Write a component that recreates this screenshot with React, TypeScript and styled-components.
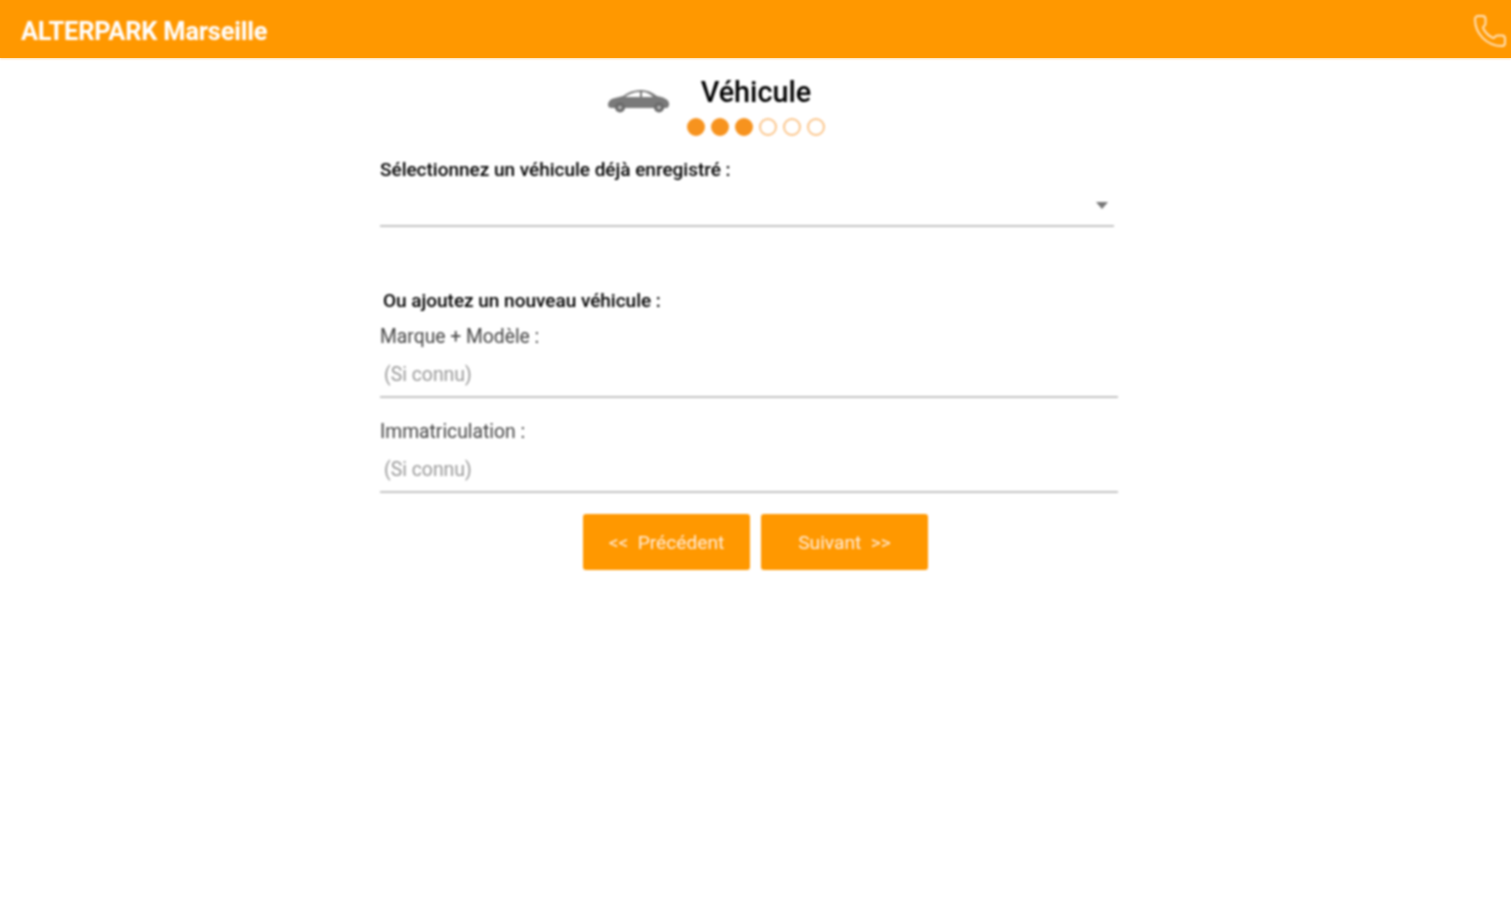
import React from "react";
import styled, { createGlobalStyle } from "styled-components";
import { Phone } from "lucide-react";

const Global = createGlobalStyle`
  html, body { margin: 0; padding: 0; background: #fff; }
  body { font-family: Roboto, "Liberation Sans", sans-serif; }
`;
const Page = styled.div`
  width: 1511px;
  height: 900px;
  overflow: hidden;
  background: #fff;
`;
const Header = styled.header`
  height: 58px;
  background: #ff9800;
  display: flex;
  align-items: center;
  justify-content: space-between;
  padding: 0 3px 0 21px;
  box-shadow: 0 1px 2px rgba(255, 152, 0, 0.35);
`;
const Brand = styled.div`
  font-size: 25.4px;
  font-weight: 700;
  color: #fff;
  letter-spacing: -0.2px;
  padding-top: 3px;
  filter: blur(0.8px);
`;
const PhoneIcon = styled(Phone)`
  color: #ffe3bd;
  width: 36px;
  height: 36px;
  margin-top: 3px;
  filter: blur(0.8px);
`;
const Main = styled.main`
  width: 738px;
  margin-left: 380px;
  display: flex;
  flex-direction: column;
  filter: blur(0.8px);
`;
const StepHead = styled.div`
  display: flex;
  height: 100px;
  padding-left: 227px;
  gap: 20px;
  align-items: flex-start;
`;
const CarIcon = styled.svg`
  width: 63px;
  height: 26px;
  margin-top: 30px;
  flex: none;
`;
const StepInfo = styled.div`
  display: flex;
  flex-direction: column;
  align-items: center;
  width: 136px;
  margin-left: -2px;
`;
const StepTitle = styled.div`
  font-size: 28.8px;
  font-weight: 500;
  line-height: 34px;
  margin-top: 17px;
  color: #000;
`;
const Dots = styled.div`
  display: flex;
  gap: 6px;
  margin-top: 9px;
`;
const Dot = styled.span<{ $on: boolean }>`
  width: 18px;
  height: 18px;
  box-sizing: border-box;
  border-radius: 50%;
  border: 2px solid ${(p) => (p.$on ? "#f7931e" : "#fbc58a")};
  background: ${(p) => (p.$on ? "#f7931e" : "#fff")};
`;
const Strong = styled.div<{ $indent?: number }>`
  font-size: 19px;
  font-weight: 500;
  line-height: 24px;
  color: #000;
  letter-spacing: -0.02px;
  padding-left: ${(p) => p.$indent ?? 0}px;
`;
const SelectBox = styled.div`
  width: 734px;
  height: 43px;
  border-bottom: 2px solid #c4c4c4;
  display: flex;
  align-items: center;
  justify-content: flex-end;
  padding-right: 6px;
  box-sizing: border-box;
  margin-top: 2px;
  margin-bottom: 62px;
`;
const Caret = styled.span`
  width: 0;
  height: 0;
  border-left: 6px solid transparent;
  border-right: 6px solid transparent;
  border-top: 7px solid #777;
  margin-top: 1px;
`;
const FieldLabel = styled.div<{ $top: number }>`
  font-size: 19.3px;
  line-height: 24px;
  color: #444;
  margin-top: ${(p) => p.$top}px;
`;
const Input = styled.input`
  display: block;
  width: 100%;
  height: 49px;
  box-sizing: border-box;
  border: none;
  border-bottom: 2px solid #c4c4c4;
  outline: none;
  padding: 3px 4px 0;
  background: transparent;
  font-family: Roboto, "Liberation Sans", sans-serif;
  font-size: 19.4px;
  &::placeholder { color: #999; opacity: 1; }
`;
const Buttons = styled.div`
  display: flex;
  gap: 11px;
  padding-left: 203px;
  margin-top: 21px;
`;
const Btn = styled.button`
  width: 167px;
  height: 56px;
  border: none;
  border-radius: 3px;
  background: #ff9800;
  color: #ffeedd;
  font-family: Roboto, "Liberation Sans", sans-serif;
  font-size: 19.2px;
  padding: 0;
  white-space: pre;
`;

export default function App() {
  const steps = [true, true, true, false, false, false];
  return (
    <Page>
      <Global />
      <Header>
        <Brand>ALTERPARK Marseille</Brand>
        <PhoneIcon strokeWidth={1.3} />
      </Header>
      <Main>
        <StepHead>
          <CarIcon viewBox="0 0 63 26">
            <path
              fill="#7a7a7a"
              d="M1 17c0-3 2-6 7-7l8-2c5-4 11-6 18-6 6 0 11 2 16 6 6 1 11 3 12 7 .5 3-1 5-3 5H5c-3 0-4-1-4-3z"
            />
            <path fill="#fff" d="M18 9c4-3 9-5 15-5v5zM35 4c5 0 8 2 11 5H35z" />
            <circle cx="13" cy="19.500" r="5" fill="#6a6a6a" />
            <circle cx="52" cy="19.500" r="5" fill="#6a6a6a" />
            <circle cx="13" cy="19.500" r="2" fill="#b5b5b5" />
            <circle cx="52" cy="19.500" r="2" fill="#b5b5b5" />
          </CarIcon>
          <StepInfo>
            <StepTitle>Véhicule</StepTitle>
            <Dots>
              {steps.map((on, i) => (
                <Dot key={i} $on={on} />
              ))}
            </Dots>
          </StepInfo>
        </StepHead>
        <Strong>Sélectionnez un véhicule déjà enregistré :</Strong>
        <SelectBox>
          <Caret />
        </SelectBox>
        <Strong $indent={3}>Ou ajoutez un nouveau véhicule :</Strong>
        <FieldLabel $top={12}>Marque + Modèle :</FieldLabel>
        <Input placeholder="(Si connu)" />
        <FieldLabel $top={22}>Immatriculation :</FieldLabel>
        <Input placeholder="(Si connu)" />
        <Buttons>
          <Btn>{"<<  Précédent"}</Btn>
          <Btn>{"Suivant  >>"}</Btn>
        </Buttons>
      </Main>
    </Page>
  );
}
